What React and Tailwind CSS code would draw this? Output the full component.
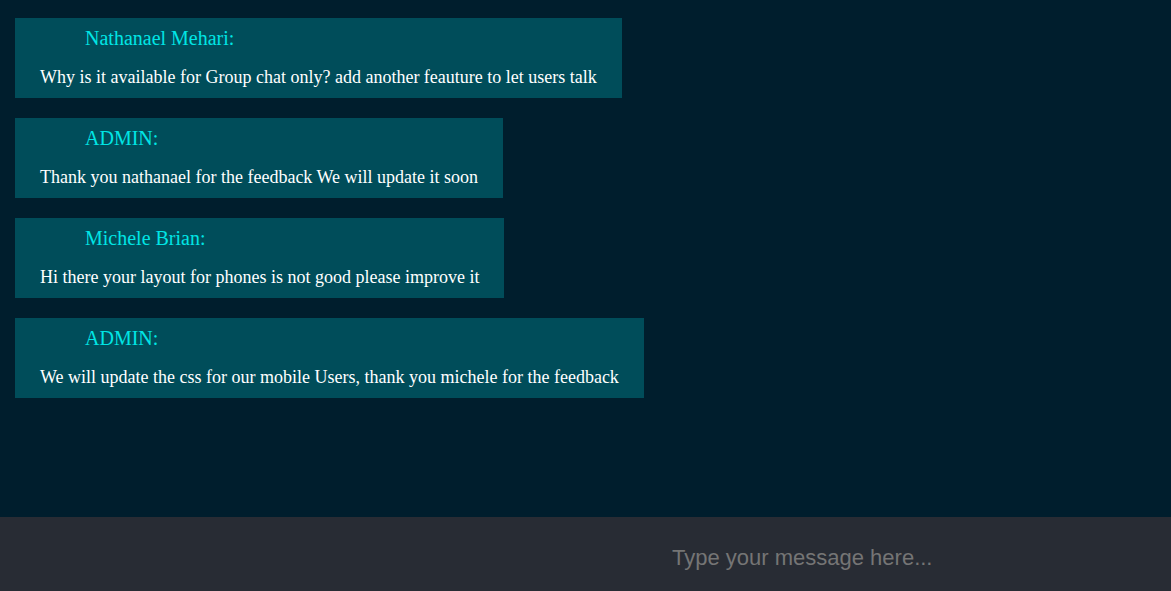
const messages = [
  { name: "Nathanael Mehari:", text: "Why is it available for Group chat only? add another feauture to let users talk" },
  { name: "ADMIN:", text: "Thank you nathanael for the feedback We will update it soon" },
  { name: "Michele Brian:", text: "Hi there your layout for phones is not good please improve it" },
  { name: "ADMIN:", text: "We will update the css for our mobile Users, thank you michele for the feedback" },
];

function Message({ name, text }) {
  return (
    <div className="w-fit bg-[#004d5a] px-[25px] pt-[9px] pb-[11px]">
      <h3 className="ml-[45px] text-[20px] leading-[22px] text-[#00e5e5]">{name}</h3>
      <p className="mt-[18px] text-[18px] leading-[20px] text-white whitespace-nowrap">{text}</p>
    </div>
  );
}

export default function App() {
  return (
    <div className="flex h-[591px] w-[1171px] flex-col bg-[#001e2d] font-['Liberation_Serif',serif]">
      <div className="flex h-[517px] flex-col gap-[20px] px-[15px] pt-[18px]">
        {messages.map((m, i) => (
          <Message key={i} name={m.name} text={m.text} />
        ))}
      </div>
      <div className="flex h-[74px] items-center bg-[#282c34]">
        <input
          type="text"
          placeholder="Type your message here..."
          className="mt-[6px] ml-[672px] w-[480px] bg-transparent font-['Liberation_Sans',Arial,sans-serif] text-[22px] text-white outline-none placeholder:text-[#757575]"
        />
      </div>
    </div>
  );
}
